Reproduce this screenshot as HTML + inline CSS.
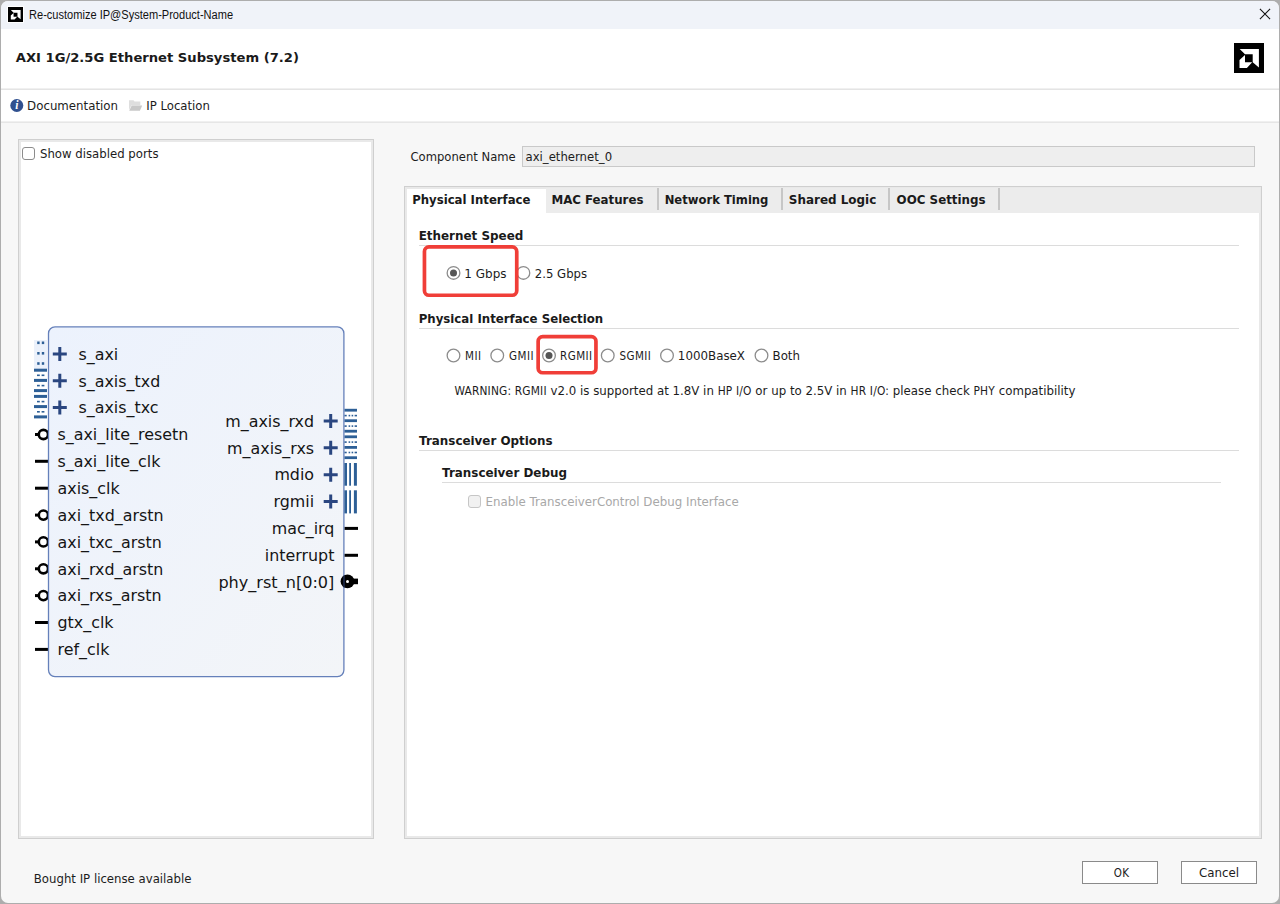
<!DOCTYPE html>
<html lang="en"><head><meta charset="utf-8"><title>Re-customize IP</title>
<style>
html,body{margin:0;padding:0}
body{width:1280px;height:904px;overflow:hidden;background:#adadad;font-family:"DejaVu Sans","Liberation Sans",sans-serif;position:relative}
.win{position:absolute;left:1px;top:1px;width:1278px;height:902px;background:#f7f7f7;border-radius:7px;overflow:hidden}
.abs{position:absolute}
.t{position:absolute;white-space:nowrap;line-height:20px;height:20px}
.ls{font-family:"DejaVu Sans Condensed","DejaVu Sans",sans-serif}
.panel{position:absolute;box-sizing:border-box;background:#fff;border:1px solid #cfcfcf;box-shadow:inset 0 0 0 2px #e9e9e9}
.rule{position:absolute;height:1px;background:#dcdcdc}
.cb{position:absolute;width:13px;height:13px;box-sizing:border-box;border:1px solid #8c8c8c;border-radius:3px;background:#fff}
.btn{position:absolute;box-sizing:border-box;border:1px solid #8a8a8a;background:#fff;font-size:11.7px;text-align:center;color:#1c1c1c}
</style></head><body>
<div class="win">

<div class="abs" style="left:-1px;top:-1px;width:1280px;height:904px">
<div class="abs" style="left:0;top:0;width:1280px;height:29px;background:#f0f3f9"></div>
<div class="abs" style="left:0;top:29px;width:1280px;height:93px;background:#fff"></div>
<div class="abs" style="left:0;top:88px;width:1280px;height:1px;background:#f0f0f0"></div><div class="abs" style="left:0;top:89px;width:1280px;height:1px;background:#e4e4e4"></div>
<div class="abs" style="left:0;top:121px;width:1280px;height:1px;background:#f0f0f0"></div><div class="abs" style="left:0;top:122px;width:1280px;height:1px;background:#e6e6e6"></div>
<div class="abs" style="left:7px;top:6px;width:17px;height:17px;background:#fff"></div>
<svg class="abs" style="left:8.3px;top:6.6px" width="15.2" height="15.2" viewBox="0 0 30 30"><rect width="30" height="30" fill="#000"/><polygon points="5.7,6 24.9,6 24.9,24.4 18.7,19.2 18.7,11.2 11,11.2" fill="#fff"/><polygon points="5.5,16.9 11,12 11,19.2 18.2,19.2 12.9,24.9 5.5,24.9" fill="#fff"/></svg>
<svg class="abs" style="left:1234px;top:43px" width="30" height="30" viewBox="0 0 30 30"><rect width="30" height="30" fill="#000"/><polygon points="5.7,6 24.9,6 24.9,24.4 18.7,19.2 18.7,11.2 11,11.2" fill="#fff"/><polygon points="5.5,16.9 11,12 11,19.2 18.2,19.2 12.9,24.9 5.5,24.9" fill="#fff"/></svg>
<div class="t" style="left:28.5px;top:5.45px;font-size:12px;color:#111;font-family:'Liberation Sans',sans-serif;transform:scaleX(0.921);transform-origin:0 50%;">Re-customize IP@System-Product-Name</div>
<svg class="abs" style="left:1258px;top:7.1px" width="14" height="14" viewBox="0 0 14 14"><path d="M1.9 1.9 L12.1 12.1 M12.1 1.9 L1.9 12.1" stroke="#111" stroke-width="1.05" fill="none"/></svg>
<div class="t" style="left:15.79px;top:47px;font-size:13.13px;line-height:21px;height:21px;color:#1a1a1a;font-weight:bold;font-family:'DejaVu Sans',sans-serif;">AXI 1G/2.5G Ethernet Subsystem (7.2)</div>
<svg class="abs" style="left:10px;top:99px" width="14" height="14" viewBox="0 0 14 14"><circle cx="6.8" cy="6.5" r="6.5" fill="#30508f"/><text x="6.9" y="10.1" font-family="Liberation Serif,serif" font-style="italic" font-weight="bold" font-size="11.5" fill="#fff" text-anchor="middle">i</text></svg>
<div class="t" style="left:27.12px;top:96px;font-size:11.8px;line-height:20px;height:20px;color:#1c1c1c;font-family:'DejaVu Sans',sans-serif;">Documentation</div>
<svg class="abs" style="left:128px;top:99px" width="16" height="13" viewBox="0 0 16 13"><path d="M1 1.3 H5.5 L6.5 2.6 H12.3 V6.3 H3.5 L1 11 Z" fill="#dedede"/><path d="M3.7 6.4 H14.2 L11.9 11.8 H1.2 Z" fill="#c8c8c8"/></svg>
<div class="t" style="left:146.23px;top:96px;font-size:11.69px;line-height:20px;height:20px;color:#1c1c1c;font-family:'DejaVu Sans',sans-serif;">IP Location</div>
<div class="panel" style="left:18px;top:139px;width:356px;height:700px"></div>
<div class="cb" style="left:22px;top:147px"></div>
<div class="t" style="left:39.97px;top:144px;font-size:11.73px;line-height:20px;height:20px;color:#1c1c1c;font-family:'DejaVu Sans',sans-serif;">Show disabled ports</div>
<div class="t" style="left:410.48px;top:147px;font-size:11.6px;line-height:20px;height:20px;color:#1c1c1c;font-family:'DejaVu Sans',sans-serif;">Component Name</div>
<div class="abs" style="left:522px;top:146px;width:733px;height:21px;box-sizing:border-box;border:1px solid #c9c9c9;background:#eeeeee"></div>
<div class="t" style="left:525.47px;top:147px;font-size:11.7px;line-height:20px;height:20px;color:#1c1c1c;font-family:'DejaVu Sans',sans-serif;">axi_ethernet_0</div>
<div class="panel" style="left:404px;top:186px;width:858px;height:653px"></div>
<div class="abs" style="left:546px;top:188px;width:714px;height:25px;background:#ececec"></div>
<div class="abs" style="left:657px;top:188px;width:2px;height:22px;background:#c6c6c6"></div>
<div class="abs" style="left:781px;top:188px;width:2px;height:22px;background:#c6c6c6"></div>
<div class="abs" style="left:888px;top:188px;width:2px;height:22px;background:#c6c6c6"></div>
<div class="abs" style="left:998px;top:188px;width:2px;height:22px;background:#c6c6c6"></div>
<div class="t" style="left:412.18px;top:190px;font-size:11.71px;line-height:20px;height:20px;color:#1a1a1a;font-weight:bold;font-family:'DejaVu Sans',sans-serif;">Physical Interface</div>
<div class="t" style="left:551.42px;top:190px;font-size:11.8px;line-height:20px;height:20px;color:#1a1a1a;font-weight:bold;font-family:'DejaVu Sans',sans-serif;">MAC Features</div>
<div class="t" style="left:664.68px;top:190px;font-size:11.6px;line-height:20px;height:20px;color:#1a1a1a;font-weight:bold;font-family:'DejaVu Sans',sans-serif;">Network Timing</div>
<div class="t" style="left:788.80px;top:190px;font-size:11.96px;line-height:20px;height:20px;color:#1a1a1a;font-weight:bold;font-family:'DejaVu Sans',sans-serif;">Shared Logic</div>
<div class="t" style="left:896.61px;top:190px;font-size:11.86px;line-height:20px;height:20px;color:#1a1a1a;font-weight:bold;font-family:'DejaVu Sans',sans-serif;">OOC Settings</div>
<div class="t" style="left:418.65px;top:226px;font-size:11.95px;line-height:20px;height:20px;color:#1a1a1a;font-weight:bold;font-family:'DejaVu Sans',sans-serif;">Ethernet Speed</div>
<div class="rule" style="left:419px;top:245px;width:820px"></div>
<div class="t" style="left:464.35px;top:264px;font-size:11.99px;line-height:20px;height:20px;color:#1c1c1c;font-family:'DejaVu Sans',sans-serif;">1 Gbps</div>
<div class="t" style="left:534.82px;top:264px;font-size:11.68px;line-height:20px;height:20px;color:#1c1c1c;font-family:'DejaVu Sans',sans-serif;">2.5 Gbps</div>
<div class="t" style="left:418.67px;top:309px;font-size:11.77px;line-height:20px;height:20px;color:#1a1a1a;font-weight:bold;font-family:'DejaVu Sans',sans-serif;">Physical Interface Selection</div>
<div class="rule" style="left:419px;top:328px;width:820px"></div>
<div class="t" style="left:464.53px;top:346px;font-size:11.5px;line-height:20px;height:20px;color:#1c1c1c;font-family:'DejaVu Sans Condensed',sans-serif;letter-spacing:0.45px;transform:translateX(0.5px);">MII</div>
<div class="t" style="left:508.60px;top:346px;font-size:11.5px;line-height:20px;height:20px;color:#1c1c1c;font-family:'DejaVu Sans Condensed',sans-serif;letter-spacing:0.45px;transform:translateX(0.5px);">GMII</div>
<div class="t" style="left:559.62px;top:346px;font-size:11.5px;line-height:20px;height:20px;color:#1c1c1c;font-family:'DejaVu Sans Condensed',sans-serif;letter-spacing:0.45px;transform:translateX(0.5px);">RGMII</div>
<div class="t" style="left:618.92px;top:346px;font-size:11.5px;line-height:20px;height:20px;color:#1c1c1c;font-family:'DejaVu Sans Condensed',sans-serif;letter-spacing:0.45px;transform:translateX(0.5px);">SGMII</div>
<div class="t" style="left:677.87px;top:346px;font-size:11.85px;line-height:20px;height:20px;color:#1c1c1c;font-family:'DejaVu Sans',sans-serif;">1000BaseX</div>
<div class="t" style="left:772.52px;top:346px;font-size:11.84px;line-height:20px;height:20px;color:#1c1c1c;font-family:'DejaVu Sans',sans-serif;">Both</div>
<div class="t" style="left:454.40px;top:381px;font-size:11.8px;line-height:20px;height:20px;color:#1c1c1c;"><span class="ls" style="font-size:11.8px;letter-spacing:0.19px">WARNING: RGMII</span> v2.0 is supported at 1.8V in <span class="ls" style="font-size:11.8px;letter-spacing:0.19px">HP I/O</span> or up to 2.5V in <span class="ls" style="font-size:11.8px;letter-spacing:0.19px">HR I/O:</span> please check <span class="ls" style="font-size:11.8px;letter-spacing:0.19px">PHY</span> compatibility</div>
<div class="t" style="left:419.10px;top:431px;font-size:11.91px;line-height:20px;height:20px;color:#1a1a1a;font-weight:bold;font-family:'DejaVu Sans',sans-serif;">Transceiver Options</div>
<div class="rule" style="left:419px;top:450px;width:820px"></div>
<div class="t" style="left:442.10px;top:463px;font-size:11.91px;line-height:20px;height:20px;color:#1a1a1a;font-weight:bold;font-family:'DejaVu Sans',sans-serif;">Transceiver Debug</div>
<div class="rule" style="left:442px;top:482px;width:779px"></div>
<div class="cb" style="left:468px;top:495px;border-color:#c6c6c6;background:#f1f1f1"></div>
<div class="t" style="left:485.52px;top:492px;font-size:11.82px;line-height:20px;height:20px;color:#a8a8a8;font-family:'DejaVu Sans',sans-serif;">Enable TransceiverControl Debug Interface</div>
<div class="t" style="left:33.83px;top:869px;font-size:11.73px;line-height:20px;height:20px;color:#1c1c1c;font-family:'DejaVu Sans',sans-serif;">Bought IP license available</div>
<div class="btn" style="left:1082px;top:861px;width:76px;height:23px"></div>
<div class="t" style="left:1113.13px;top:863px;font-size:11.5px;line-height:20px;height:20px;color:#1c1c1c;font-family:'DejaVu Sans Condensed',sans-serif;letter-spacing:0.45px;transform:translateX(0.5px);">OK</div>
<div class="btn" style="left:1181px;top:861px;width:76px;height:23px"></div>
<div class="t" style="left:1199.06px;top:863px;font-size:11.84px;line-height:20px;height:20px;color:#1c1c1c;font-family:'DejaVu Sans',sans-serif;">Cancel</div>
<svg class="abs" style="left:400px;top:230px" width="420" height="160" viewBox="400 230 420 160"><circle cx="453.5" cy="272.9" r="6.35" fill="#fff" stroke="#8c8c8c" stroke-width="1.3"/><circle cx="453.5" cy="272.9" r="3.5" fill="#555"/><circle cx="523.4" cy="272.9" r="6.35" fill="#fff" stroke="#8c8c8c" stroke-width="1.3"/><rect x="424.45" y="246.95" width="92.30" height="48.30" rx="4.5" ry="4.5" fill="none" stroke="#f03e38" stroke-width="3.7"/><circle cx="453.5" cy="355.45" r="6.35" fill="#fff" stroke="#8c8c8c" stroke-width="1.3"/><circle cx="497.25" cy="355.45" r="6.35" fill="#fff" stroke="#8c8c8c" stroke-width="1.3"/><circle cx="549.0" cy="355.45" r="6.35" fill="#fff" stroke="#8c8c8c" stroke-width="1.3"/><circle cx="549.0" cy="355.45" r="3.5" fill="#555"/><circle cx="607.75" cy="355.45" r="6.35" fill="#fff" stroke="#8c8c8c" stroke-width="1.3"/><circle cx="667.0" cy="355.45" r="6.35" fill="#fff" stroke="#8c8c8c" stroke-width="1.3"/><circle cx="761.5" cy="355.45" r="6.35" fill="#fff" stroke="#8c8c8c" stroke-width="1.3"/><rect x="538.15" y="336.65" width="57.80" height="36.10" rx="4.5" ry="4.5" fill="none" stroke="#f03e38" stroke-width="3.7"/></svg>
<svg class="abs" style="left:0;top:0" width="400" height="700" viewBox="0 0 400 700" font-family="DejaVu Sans, sans-serif" font-size="15.9">
<defs><linearGradient id="bg" x1="0" y1="0" x2="1" y2="1"><stop offset="0" stop-color="#ecf2fd"/><stop offset="1" stop-color="#f3f5f8"/></linearGradient></defs>
<path d="M35 434.5 H39" stroke="#000" stroke-width="3"/>
<circle cx="43.4" cy="434.5" r="4.6" fill="none" stroke="#000" stroke-width="2.6"/>
<path d="M35 461.3 H48.5" stroke="#000" stroke-width="3"/>
<path d="M35 488.2 H48.5" stroke="#000" stroke-width="3"/>
<path d="M35 515.1 H39" stroke="#000" stroke-width="3"/>
<circle cx="43.4" cy="515.1" r="4.6" fill="none" stroke="#000" stroke-width="2.6"/>
<path d="M35 541.9 H39" stroke="#000" stroke-width="3"/>
<circle cx="43.4" cy="541.9" r="4.6" fill="none" stroke="#000" stroke-width="2.6"/>
<path d="M35 568.8 H39" stroke="#000" stroke-width="3"/>
<circle cx="43.4" cy="568.8" r="4.6" fill="none" stroke="#000" stroke-width="2.6"/>
<path d="M35 595.6 H39" stroke="#000" stroke-width="3"/>
<circle cx="43.4" cy="595.6" r="4.6" fill="none" stroke="#000" stroke-width="2.6"/>
<path d="M35 622.5 H48.5" stroke="#000" stroke-width="3"/>
<path d="M35 649.4 H48.5" stroke="#000" stroke-width="3"/>
<rect x="48.5" y="326.9" width="295.4" height="349.7" rx="6.5" ry="6.5" fill="url(#bg)" stroke="#6580ba" stroke-width="1.3"/>
<path d="M52.8 353.9 H66.8 M59.8 346.9 V360.9" stroke="#2a4680" stroke-width="3" fill="none"/>
<text x="78.5" y="359.6" fill="#151515">s_axi</text>
<path d="M52.8 380.76 H66.8 M59.8 373.76 V387.76" stroke="#2a4680" stroke-width="3" fill="none"/>
<text x="78.5" y="386.5" fill="#151515">s_axis_txd</text>
<path d="M52.8 407.62 H66.8 M59.8 400.62 V414.62" stroke="#2a4680" stroke-width="3" fill="none"/>
<text x="78.5" y="413.3" fill="#151515">s_axis_txc</text>
<rect x="34" y="340" width="13" height="30" fill="#ebf1fb"/>
<rect x="37.2" y="341.5" width="2.4" height="2.6" fill="#2d5f96"/>
<rect x="41.8" y="341.5" width="2.4" height="2.6" fill="#2d5f96"/>
<rect x="37.2" y="352.0" width="2.4" height="2.6" fill="#2d5f96"/>
<rect x="41.8" y="352.0" width="2.4" height="2.6" fill="#2d5f96"/>
<rect x="37.2" y="362.2" width="2.4" height="2.6" fill="#2d5f96"/>
<rect x="41.8" y="362.2" width="2.4" height="2.6" fill="#2d5f96"/>
<rect x="34" y="368.7" width="13" height="3" fill="#2d5f96"/>
<rect x="34" y="378.9" width="13" height="3" fill="#2d5f96"/>
<rect x="34" y="389.1" width="13" height="3" fill="#2d5f96"/>
<rect x="34" y="394.9" width="13" height="3" fill="#2d5f96"/>
<rect x="34" y="405.1" width="13" height="3" fill="#2d5f96"/>
<rect x="34" y="415.4" width="13" height="3" fill="#2d5f96"/>
<rect x="37" y="374.5" width="2.8" height="1.6" fill="#2d5f96"/>
<rect x="41.6" y="374.5" width="2.8" height="1.6" fill="#2d5f96"/>
<rect x="37" y="384.8" width="2.8" height="1.6" fill="#2d5f96"/>
<rect x="41.6" y="384.8" width="2.8" height="1.6" fill="#2d5f96"/>
<rect x="37" y="400.8" width="2.8" height="1.6" fill="#2d5f96"/>
<rect x="41.6" y="400.8" width="2.8" height="1.6" fill="#2d5f96"/>
<rect x="37" y="411.0" width="2.8" height="1.6" fill="#2d5f96"/>
<rect x="41.6" y="411.0" width="2.8" height="1.6" fill="#2d5f96"/>
<text x="57.5" y="440.2" fill="#151515">s_axi_lite_resetn</text>
<text x="57.5" y="467.0" fill="#151515">s_axi_lite_clk</text>
<text x="57.5" y="493.9" fill="#151515">axis_clk</text>
<text x="57.5" y="520.8" fill="#151515">axi_txd_arstn</text>
<text x="57.5" y="547.6" fill="#151515">axi_txc_arstn</text>
<text x="57.5" y="574.5" fill="#151515">axi_rxd_arstn</text>
<text x="57.5" y="601.3" fill="#151515">axi_rxs_arstn</text>
<text x="57.5" y="628.2" fill="#151515">gtx_clk</text>
<text x="57.5" y="655.1" fill="#151515">ref_clk</text>
<path d="M323.7 421.0 H337.7 M330.7 414.0 V428.0" stroke="#2a4680" stroke-width="3" fill="none"/>
<text x="314.1" y="426.7" fill="#151515" text-anchor="end">m_axis_rxd</text>
<path d="M323.7 447.86 H337.7 M330.7 440.86 V454.86" stroke="#2a4680" stroke-width="3" fill="none"/>
<text x="314.1" y="453.6" fill="#151515" text-anchor="end">m_axis_rxs</text>
<path d="M323.7 474.72 H337.7 M330.7 467.72 V481.72" stroke="#2a4680" stroke-width="3" fill="none"/>
<text x="314.1" y="480.4" fill="#151515" text-anchor="end">mdio</text>
<path d="M323.7 501.58 H337.7 M330.7 494.58 V508.58" stroke="#2a4680" stroke-width="3" fill="none"/>
<text x="314.1" y="507.3" fill="#151515" text-anchor="end">rgmii</text>
<rect x="344.5" y="408.8" width="12.5" height="2.8" fill="#2d5f96"/>
<rect x="344.5" y="419.3" width="12.5" height="2.8" fill="#2d5f96"/>
<rect x="344.5" y="429.8" width="12.5" height="2.8" fill="#2d5f96"/>
<rect x="344.5" y="435.4" width="12.5" height="2.8" fill="#2d5f96"/>
<rect x="344.5" y="446.0" width="12.5" height="2.8" fill="#2d5f96"/>
<rect x="344.5" y="456.3" width="12.5" height="2.8" fill="#2d5f96"/>
<rect x="344.5" y="414.8" width="2.2" height="1.6" fill="#2d5f96"/>
<rect x="348.6" y="414.8" width="1.6" height="1.6" fill="#2d5f96"/>
<rect x="351.6" y="414.8" width="1.6" height="1.6" fill="#2d5f96"/>
<rect x="354.6" y="414.8" width="2.4" height="1.6" fill="#2d5f96"/>
<rect x="344.5" y="425.3" width="2.2" height="1.6" fill="#2d5f96"/>
<rect x="348.6" y="425.3" width="1.6" height="1.6" fill="#2d5f96"/>
<rect x="351.6" y="425.3" width="1.6" height="1.6" fill="#2d5f96"/>
<rect x="354.6" y="425.3" width="2.4" height="1.6" fill="#2d5f96"/>
<rect x="344.5" y="441.3" width="2.2" height="1.6" fill="#2d5f96"/>
<rect x="348.6" y="441.3" width="1.6" height="1.6" fill="#2d5f96"/>
<rect x="351.6" y="441.3" width="1.6" height="1.6" fill="#2d5f96"/>
<rect x="354.6" y="441.3" width="2.4" height="1.6" fill="#2d5f96"/>
<rect x="344.5" y="451.7" width="2.2" height="1.6" fill="#2d5f96"/>
<rect x="348.6" y="451.7" width="1.6" height="1.6" fill="#2d5f96"/>
<rect x="351.6" y="451.7" width="1.6" height="1.6" fill="#2d5f96"/>
<rect x="354.6" y="451.7" width="2.4" height="1.6" fill="#2d5f96"/>
<rect x="344.4" y="463" width="2.6" height="22.7" fill="#2d5f96"/>
<rect x="349.2" y="463" width="1.8" height="22.7" fill="#2d5f96"/>
<rect x="353.9" y="463" width="3" height="22.7" fill="#2d5f96"/>
<rect x="344.4" y="490.3" width="2.6" height="23.1" fill="#2d5f96"/>
<rect x="349.2" y="490.3" width="1.8" height="23.1" fill="#2d5f96"/>
<rect x="353.9" y="490.3" width="3" height="23.1" fill="#2d5f96"/>
<path d="M344.6 528.4 H358" stroke="#000" stroke-width="3"/>
<text x="334.4" y="534.1" fill="#151515" text-anchor="end">mac_irq</text>
<path d="M344.6 555.3 H358" stroke="#000" stroke-width="3"/>
<text x="334.4" y="561.0" fill="#151515" text-anchor="end">interrupt</text>
<circle cx="347.5" cy="581.4" r="6.9" fill="#000"/><circle cx="347.5" cy="581.4" r="1.5" fill="#fff"/>
<path d="M352 581.4 H358" stroke="#000" stroke-width="5.6"/>
<path d="M344 575.4 V587.4" stroke="#2b3f73" stroke-width="1.3" opacity="0.8"/>
<text x="334.4" y="587.9" fill="#151515" text-anchor="end" font-size="16.1">phy_rst_n[0:0]</text>
</svg>
</div></div></body></html>
